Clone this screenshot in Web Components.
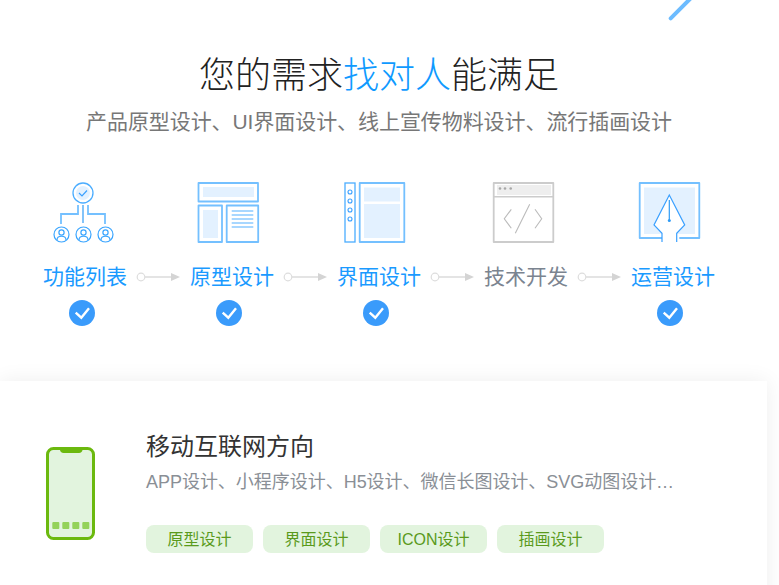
<!DOCTYPE html>
<html lang="zh">
<head>
<meta charset="utf-8">
<title>您的需求找对人能满足</title>
<style>
  html, body { margin: 0; height: 585px; overflow: hidden; background: #fff; }
  body { font-family: "Liberation Sans", "Noto Sans CJK SC", sans-serif; }
</style>
</head>
<body>
<demand-page>
  <section-heading>
    <span slot="title">您的需求<b style="font-weight:inherit;color:#0f9aff">找对人</b>能满足</span>
    <span slot="sub">产品原型设计、UI界面设计、线上宣传物料设计、流行插画设计</span>
  </section-heading>

  <step-flow>
    <flow-step done>
      <svg slot="icon" width="84" height="62" viewBox="0 0 84 62" fill="none">
        <circle cx="40" cy="11" r="7" fill="#e3f1ff"/>
        <circle cx="40" cy="11" r="10" stroke="#4badff" stroke-width="1.3"/>
        <path d="M36 11l3 3 5-5.500" stroke="#3aa0ff" stroke-width="1.200"/>
        <path d="M40 23v18" stroke="#2f9bf5" stroke-width="1.200"/>
        <path d="M35 23v9H18v10M45 23v9h17v10" stroke="#74c0ff" stroke-width="1.800"/>
        <g stroke="#3aa5ff" stroke-width="1.200">
          <circle cx="18.500" cy="52.500" r="7.500"/><circle cx="18.500" cy="50.500" r="2.600"/><path d="M14 58c0-5 9-5 9 0"/>
          <circle cx="40.500" cy="52.500" r="7.500"/><circle cx="40.500" cy="50.500" r="2.600"/><path d="M36 58c0-5 9-5 9 0"/>
          <circle cx="62.500" cy="52.500" r="7.500"/><circle cx="62.500" cy="50.500" r="2.600"/><path d="M58 58c0-5 9-5 9 0"/>
        </g>
      </svg>
      功能列表
    </flow-step>
    <flow-arrow></flow-arrow>
    <flow-step done>
      <svg slot="icon" width="84" height="62" viewBox="0 0 84 62" fill="none">
        <g fill="#e3f1ff">
          <rect x="13" y="5" width="51" height="10"/>
          <rect x="13" y="28" width="15" height="28"/>
        </g>
        <g stroke="#74c0ff" stroke-width="1.800" stroke-linejoin="round">
          <rect x="8.500" y="1" width="59.500" height="18.500"/>
          <rect x="8.500" y="23.500" width="23.500" height="36.500"/>
          <rect x="36.700" y="23.500" width="31.500" height="36.500"/>
        </g>
        <path d="M41.700 29h21.600M41.700 33h21.600M41.700 37h21.600M41.700 41h21.600M41.700 45h21.600" stroke="#8ccaff" stroke-width="1.300"/>
      </svg>
      原型设计
    </flow-step>
    <flow-arrow></flow-arrow>
    <flow-step done>
      <svg slot="icon" width="84" height="62" viewBox="0 0 84 62" fill="none">
        <g fill="#e3f1ff">
          <rect x="27" y="5.500" width="36" height="14"/>
          <rect x="27" y="22" width="36" height="34"/>
        </g>
        <g stroke="#74c0ff" stroke-width="1.800" stroke-linejoin="round">
          <rect x="22.700" y="1" width="44.600" height="59"/>
        </g>
        <rect x="8" y="1" width="10" height="59" stroke="#4badff" stroke-width="1.300"/>
        <g stroke="#3aa0ff" stroke-width="1.100">
          <circle cx="13" cy="10" r="2"/><circle cx="13" cy="19" r="2"/><circle cx="13" cy="28" r="2"/><circle cx="13" cy="37" r="2"/>
        </g>
      </svg>
      界面设计
    </flow-step>
    <flow-arrow></flow-arrow>
    <flow-step muted>
      <svg slot="icon" width="84" height="62" viewBox="0 0 84 62" fill="none">
        <rect x="13" y="3" width="54" height="10" fill="#eeeeee"/>
        <rect x="9.700" y="1" width="59.600" height="59" stroke="#cccccc" stroke-width="1.800" stroke-linejoin="round"/>
        <path d="M9.700 14.700h59.600" stroke="#cccccc" stroke-width="1.400"/>
        <g fill="#a8a8a8"><circle cx="16" cy="6.500" r="1.300"/><circle cx="21" cy="6.500" r="1.300"/><circle cx="26.700" cy="6.500" r="1.300"/></g>
        <path d="M27.300 27.300l-7 9.400 7 9.600M45.700 22.300l-14.400 29M51 27.300l6.700 9.400-6.700 9.600" stroke="#bbbbbb" stroke-width="1.100"/>
      </svg>
      技术开发
    </flow-step>
    <flow-arrow></flow-arrow>
    <flow-step done>
      <svg slot="icon" width="84" height="62" viewBox="0 0 84 62" fill="none">
        <rect x="13" y="5.500" width="51" height="46.500" fill="#e3f1ff"/>
        <path d="M31 56H8.700V1h59.600v55H48.300" stroke="#74c0ff" stroke-width="1.800" stroke-linejoin="round"/>
        <path d="M31 60V51.300L23 43 38.300 13 53.700 43l-8 8.300V60" fill="#fff" stroke="#3aa0ff" stroke-width="1.200"/>
        <path d="M38.300 18v20" stroke="#2f9bf5" stroke-width="1.200"/>
        <circle cx="38.300" cy="38.500" r="1.500" fill="#2f9bf5"/>
      </svg>
      运营设计
    </flow-step>
  </step-flow>

  <direction-card>
    <phone-icon slot="icon"></phone-icon>
    <span slot="title">移动互联网方向</span>
    <span slot="desc">APP设计、小程序设计、H5设计、微信长图设计、SVG动图设计…</span>
    <card-tag>原型设计</card-tag>
    <card-tag>界面设计</card-tag>
    <card-tag>ICON设计</card-tag>
    <card-tag>插画设计</card-tag>
  </direction-card>
</demand-page>

<script>
// Clase base: clona el template una vez y lo mete en el shadow root
class BaseElement extends HTMLElement {
  constructor() {
    super();
    this.attachShadow({ mode: "open" });
    const template = document.createElement("template");
    template.innerHTML = `<style>${this.getStyles()}</style>${this.getTemplate()}`;
    this.shadowRoot.appendChild(template.content.cloneNode(true));
  }
  getStyles() { return ""; }
  getTemplate() { return "<slot></slot>"; }
}

class DemandPage extends BaseElement {
  getStyles() {
    return `
      :host { display: block; position: relative; height: 585px; overflow: hidden; }
      .stroke {
        position: absolute; left: 663.500px; top: 4.500px; width: 36px; height: 4px;
        background: #6dbcff; border-radius: 2px; transform: rotate(-45deg);
      }
    `;
  }
  getTemplate() { return `<div class="stroke"></div><slot></slot>`; }
}

class SectionHeading extends BaseElement {
  getStyles() {
    return `
      :host { display: block; padding: 50px 21px 0 0; text-align: center; }
      .title { font-size: 36px; line-height: 52px; color: #222; font-weight: 300; }
      .sub { margin-top: 6px; font-size: 21px; line-height: 28px; color: #777; letter-spacing: -0.07px; }
    `;
  }
  getTemplate() {
    return `<div class="title"><slot name="title"></slot></div><div class="sub"><slot name="sub"></slot></div>`;
  }
}

class StepFlow extends BaseElement {
  getStyles() {
    return `:host { display: flex; align-items: flex-start; padding: 46px 0 0 43px; }`;
  }
}

class FlowStep extends BaseElement {
  getStyles() {
    return `
      :host { display: flex; flex-direction: column; align-items: center; width: 84px; color: #1a9aff; }
      :host([muted]) { color: #7b8490; }
      .icon { display: block; height: 62px; }
      .label { margin-top: 18px; font-size: 21px; line-height: 30px; white-space: nowrap; }
      .check { display: none; margin: 8px 6px 0 0; }
      :host([done]) .check { display: block; }
    `;
  }
  getTemplate() {
    return `
      <div class="icon"><slot name="icon"></slot></div>
      <div class="label"><slot></slot></div>
      <svg class="check" width="26" height="26" viewBox="0 0 26 26">
        <circle cx="13" cy="13" r="13" fill="#3a9bfb"/>
        <path d="M6.700 12.700l5.600 5 7.700-9.400" fill="none" stroke="#fff" stroke-width="2.400"/>
      </svg>
    `;
  }
}

class FlowArrow extends BaseElement {
  getStyles() {
    return `:host { display: block; width: 63px; margin-top: 81px; height: 30px; }`;
  }
  getTemplate() {
    return `
      <svg width="63" height="30" viewBox="0 0 63 30" fill="none">
        <path d="M18 14h27" stroke="#e4e4e4" stroke-width="2"/>
        <circle cx="14" cy="14" r="3.800" fill="#fff" stroke="#dddddd" stroke-width="1.200"/>
        <path d="M44 10l9 4-9 4z" fill="#d4d4d4"/>
      </svg>
    `;
  }
}

class DirectionCard extends BaseElement {
  getStyles() {
    return `
      :host {
        display: flex; gap: 51px; width: 721px; height: 300px;
        margin-top: 55px; padding: 48px 0 0 46px; box-sizing: content-box;
        background: #fff; box-shadow: 0 0 20px rgba(0,0,0,.07);
      }
      .icon { padding-top: 18px; }
      .title { font-size: 24px; line-height: 36px; color: #333; }
      .desc { margin-top: 4px; font-size: 18px; line-height: 26px; color: #8a8f96; white-space: nowrap; letter-spacing: -0.03px; }
      .tags { display: flex; gap: 10px; margin-top: 30px; }
    `;
  }
  getTemplate() {
    return `
      <div class="icon"><slot name="icon"></slot></div>
      <div>
        <div class="title"><slot name="title"></slot></div>
        <div class="desc"><slot name="desc"></slot></div>
        <div class="tags"><slot></slot></div>
      </div>
    `;
  }
}

class CardTag extends BaseElement {
  getStyles() {
    return `
      :host {
        display: flex; align-items: center; justify-content: center;
        width: 107px; height: 28px; border-radius: 8px; box-sizing: border-box; padding-bottom: 2px;
        background: #e2f4de; color: #5a9a1c; font-size: 16px; white-space: nowrap;
      }
    `;
  }
}

class PhoneIcon extends BaseElement {
  getStyles() { return `:host { display: block; width: 49px; height: 93px; }`; }
  getTemplate() {
    return `
      <svg width="49" height="93" viewBox="0 0 49 93" fill="none" style="display:block">
        <rect x="1.500" y="1.500" width="46" height="90" rx="6" fill="#e2f4de" stroke="#6bb90e" stroke-width="3"/>
        <path d="M14 1h22.500v1.500c0 2-1.500 3.500-3.500 3.500H17.500c-2 0-3.500-1.500-3.500-3.500z" fill="#6bb90e"/>
        <g fill="#93d259">
          <rect x="6.300" y="75" width="7" height="7" rx="1"/><rect x="16.300" y="75" width="7" height="7" rx="1"/>
          <rect x="26.300" y="75" width="7" height="7" rx="1"/><rect x="36.300" y="75" width="7" height="7" rx="1"/>
        </g>
      </svg>
    `;
  }
}

customElements.define("demand-page", DemandPage);
customElements.define("section-heading", SectionHeading);
customElements.define("step-flow", StepFlow);
customElements.define("flow-step", FlowStep);
customElements.define("flow-arrow", FlowArrow);
customElements.define("direction-card", DirectionCard);
customElements.define("card-tag", CardTag);
customElements.define("phone-icon", PhoneIcon);
</script>
</body>
</html>
